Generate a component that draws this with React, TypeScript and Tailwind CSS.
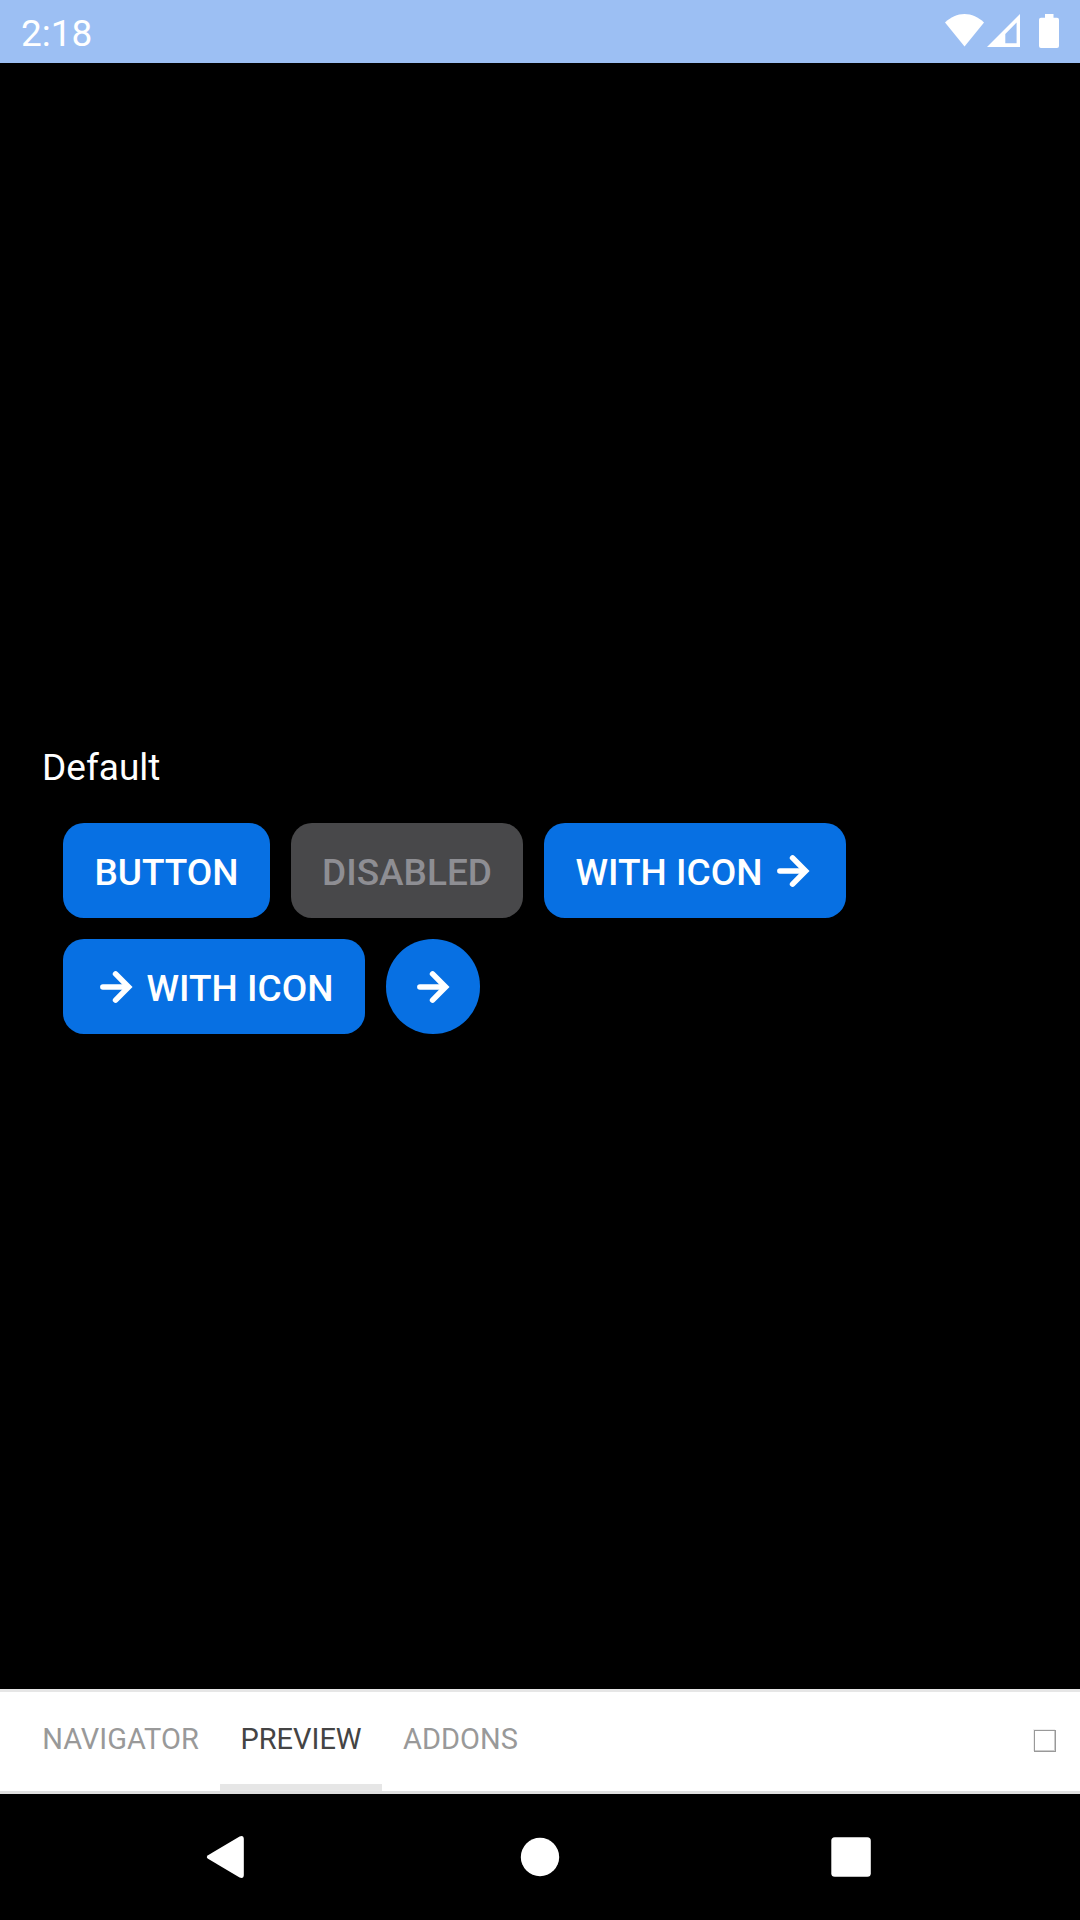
import React from "react";

function ArrowIcon() {
  return (
    <svg className="h-[42px] w-[42px] shrink-0" viewBox="0 0 42 42" fill="none" stroke="white" strokeWidth="5.6" strokeLinecap="round">
      <path d="M7.9 21H32" />
      <path d="M20.6 7.9L33.6 21L20.6 34.1" strokeLinejoin="miter" />
    </svg>
  );
}

function StatusBar() {
  return (
    <header className="flex h-[63px] items-start justify-between bg-[#9cbff3] text-white">
      <span className="pl-[21px] pt-[12px] text-[37px] leading-[43px]">2:18</span>
      <svg className="h-[63px] w-[160px]" viewBox="0 0 160 63" fill="white">
        <path d="M25 22.6C30.5 17 37.5 14 44.5 14S58.5 17 64 22.6L44.5 46.6Z" />
        <path fillRule="evenodd" d="M67 47L100 14V47ZM85.3 34V43.2H96.6V22.6Z" />
        <path d="M125 14h8.5v3.7h3.5q2 0 2 2v26.3q0 2-2 2h-16q-2 0-2-2v-26.3q0-2 2-2h4z" />
      </svg>
    </header>
  );
}

const button = "flex h-[95px] items-center justify-center rounded-[21px] text-[37px] font-medium leading-[43px]";

function Tab({ label, width, active = false }: { label: string; width: string; active?: boolean }) {
  return (
    <button
      className={`h-full border-b-[7px] pt-[2px] text-center ${width} ${
        active ? "border-[#e6e6e6] text-[#444444]" : "border-transparent text-[#999999]"
      }`}
    >
      {label}
    </button>
  );
}

export default function App() {
  return (
    <div className="flex h-[1920px] w-[1080px] flex-col bg-black font-['Roboto',sans-serif]">
      <StatusBar />
      <main className="flex flex-1 flex-col justify-center px-[42px] pt-[28px]">
        <h1 className="text-[37px] leading-[43px] text-white">Default</h1>
        <div className="mt-[34px] flex flex-wrap gap-[21px] px-[21px] text-white">
          <button className={`${button} w-[207px] bg-[#0770e3]`}><span className="pt-[3px]">BUTTON</span></button>
          <button className={`${button} w-[232px] bg-[#48484a] text-[#8e8e93]`} disabled><span className="pt-[3px]">DISABLED</span></button>
          <button className={`${button} w-[302px] gap-[10px] bg-[#0770e3]`}><span className="pt-[3px]">WITH ICON</span><ArrowIcon /></button>
          <button className={`${button} w-[302px] gap-[10px] bg-[#0770e3]`}><ArrowIcon /><span className="pt-[3px]">WITH ICON</span></button>
          <button className="flex h-[95px] w-[94px] items-center justify-center rounded-full bg-[#0770e3]" aria-label="Next"><ArrowIcon /></button>
        </div>
      </main>
      <nav className="flex h-[105px] items-center justify-between border-y-[3px] border-t-[#e6e6e6] border-b-[#e0e0e0] bg-white pl-[21px] pr-[24px] text-[29px] leading-[34px]">
        <div className="flex h-full">
          <Tab label="NAVIGATOR" width="w-[199px]" />
          <Tab label="PREVIEW" width="w-[162px]" active />
          <Tab label="ADDONS" width="w-[157px]" />
        </div>
        <span className="mb-[2px] h-[22px] w-[22px] border border-[#999999] shadow-[inset_-1px_-1px_0_#cccccc,-1px_-1px_0_#eeeeee]" />
      </nav>
      <footer className="flex h-[126px] items-center justify-center">
        <svg className="h-[126px] w-[1080px]" viewBox="0 0 1080 126" fill="white">
          <path d="M208 61.2L239.6 42.4Q243.8 41 243.8 45V81Q243.8 85 239.6 83.6L208 64.8Q205.6 63 208 61.2Z" />
          <circle cx="540" cy="63" r="19.2" />
          <rect x="831.3" y="43.3" width="39.5" height="39.5" rx="3.5" />
        </svg>
      </footer>
    </div>
  );
}
